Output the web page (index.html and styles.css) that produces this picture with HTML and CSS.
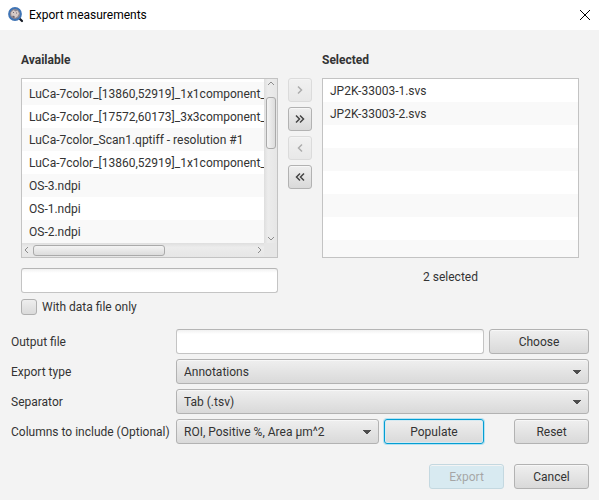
FILE: index.html
```html
<!DOCTYPE html>
<html lang="en">
<head>
<meta charset="utf-8">
<meta name="viewport" content="width=device-width, initial-scale=1">
<title>Export measurements</title>
<link rel="stylesheet" href="styles.css">
</head>
<body>
<header class="titlebar">
  <svg class="app-icon" viewBox="0 0 16 16" aria-hidden="true">
    <path d="M11.5 11.5 14 14" stroke="#171c26" stroke-width="2.2" stroke-linecap="round"/>
    <circle cx="7" cy="7" r="6" fill="#8d8790" stroke="#3f74b5" stroke-width="1.800"/>
    <path d="M3 5.500 5.500 3l2 1.500 2-1 1.500 3-1.500 3-2.500 1.500-1.500-2.500-2 .5z" fill="#d6cac6"/>
    <path d="M8 5.500h1v1H8zM5 9h1.500v1.500H5zM5 5h1v1H5z" fill="#6f6570"/>
  </svg>
  <h1 class="title">Export measurements</h1>
  <button class="close" type="button" aria-label="Close">
    <svg viewBox="0 0 10 10" aria-hidden="true"><path d="M0 0 10 10M10 0 0 10"/></svg>
  </button>
</header>

<main>
  <section class="picker">
    <div class="side">
      <h2>Available</h2>
      <div class="list scrolling">
        <ul class="rows">
          <li></li>
          <li>LuCa-7color_[13860,52919]_1x1component_data.tif</li>
          <li>LuCa-7color_[17572,60173]_3x3component_data.tif</li>
          <li>LuCa-7color_Scan1.qptiff - resolution #1</li>
          <li>LuCa-7color_[13860,52919]_1x1component_data.tif</li>
          <li>OS-3.ndpi</li>
          <li>OS-1.ndpi</li>
          <li>OS-2.ndpi</li>
        </ul>
        <div class="bar vertical">
          <svg viewBox="0 0 8 5" aria-hidden="true"><path d="M1 4 4 1 7 4"/></svg>
          <div class="track"><div class="thumb"></div></div>
          <svg viewBox="0 0 8 5" aria-hidden="true"><path d="M1 1 4 4 7 1"/></svg>
        </div>
        <div class="bar horizontal">
          <svg viewBox="0 0 5 8" aria-hidden="true"><path d="M4 1 1 4 4 7"/></svg>
          <div class="track"><div class="thumb"></div></div>
          <svg viewBox="0 0 5 8" aria-hidden="true"><path d="M1 1 4 4 1 7"/></svg>
        </div>
        <div class="corner"></div>
      </div>
      <input class="field" type="text" aria-label="Filter available images">
      <label class="check"><input type="checkbox">With data file only</label>
    </div>

    <div class="movers">
      <button class="button" type="button" aria-label="Select" disabled><svg viewBox="0 0 10 10" aria-hidden="true"><path d="M3 1.500 6.500 5 3 8.500"/></svg></button>
      <button class="button" type="button" aria-label="Select all"><svg viewBox="0 0 10 10" aria-hidden="true"><path d="M1 1.500 4.500 5 1 8.500M5 1.500 8.500 5 5 8.500"/></svg></button>
      <button class="button" type="button" aria-label="Remove" disabled><svg viewBox="0 0 10 10" aria-hidden="true"><path d="M7 1.500 3.500 5 7 8.500"/></svg></button>
      <button class="button" type="button" aria-label="Remove all"><svg viewBox="0 0 10 10" aria-hidden="true"><path d="M5 1.500 1.500 5 5 8.500M9 1.500 5.500 5 9 8.500"/></svg></button>
    </div>

    <div class="side">
      <h2>Selected</h2>
      <div class="list">
        <ul class="rows">
          <li>JP2K-33003-1.svs</li>
          <li>JP2K-33003-2.svs</li>
          <li></li><li></li><li></li><li></li><li></li><li></li>
        </ul>
      </div>
      <p class="count">2 selected</p>
    </div>
  </section>

  <form class="options">
    <label for="output">Output file</label>
    <div class="line">
      <input class="field grow" id="output" type="text">
      <button class="button wide" type="button">Choose</button>
    </div>
    <label for="type">Export type</label>
    <select class="button combo" id="type"><option>Annotations</option></select>
    <label for="separator">Separator</label>
    <select class="button combo" id="separator"><option>Tab (.tsv)</option></select>
    <label for="columns">Columns to include (Optional)</label>
    <div class="line">
      <select class="button combo grow" id="columns"><option>ROI, Positive %, Area µm^2</option></select>
      <button class="button wide focused" type="button">Populate</button>
      <button class="button reset" type="button">Reset</button>
    </div>
  </form>

  <footer class="actions">
    <button class="button default" type="button" disabled>Export</button>
    <button class="button" type="button">Cancel</button>
  </footer>
</main>
</body>
</html>
```
FILE: styles.css
```css
* {
  box-sizing: border-box;
}

body {
  margin: 0;
  min-height: 100vh;
  background: #f3f3f3;
  color: #333;
  font: 12px/16px Roboto, "Noto Sans", sans-serif;
}

h1, h2, p, ul {
  margin: 0;
  padding: 0;
}

button, input, select {
  margin: 0;
  color: inherit;
  font: inherit;
}

/* Title bar */
.titlebar {
  display: flex;
  align-items: center;
  height: 30px;
  padding: 0 8px;
  background: #fff;
  color: #000;
}

.app-icon {
  width: 16px;
  height: 16px;
  margin-right: 5px;
}

.title {
  flex: 1;
  font-size: 12px;
  font-weight: 400;
}

.close {
  display: flex;
  padding: 0;
  border: 0;
  background: none;
}

.close svg {
  width: 12px;
  height: 12px;
  padding: 1px;
  overflow: visible;
  stroke: #000;
}

/* Image lists */
.picker {
  display: grid;
  grid-template-columns: 1fr 24px 1fr;
  column-gap: 10px;
  padding: 22px 20px 0 21px;
}

.side {
  display: flex;
  flex-direction: column;
  min-width: 0;
}

h2 {
  margin-bottom: 10px;
  font-size: 12px;
  line-height: 16px;
  font-weight: 700;
}

.list {
  display: grid;
  grid-template: minmax(0, 1fr) / minmax(0, 1fr);
  height: 180px;
  margin-bottom: 10px;
  border: 1px solid #c3c3c3;
  background: #fff;
  overflow: hidden;
}

.list.scrolling {
  grid-template: minmax(0, 1fr) 14px / minmax(0, 1fr) 13px;
}

.rows {
  list-style: none;
  overflow: hidden;
}

.scrolling .rows {
  display: flex;
  flex-direction: column;
  justify-content: flex-end;
}

.rows li {
  flex: none;
  height: 23px;
  padding: 1px 7px 0;
  line-height: 23px;
  white-space: nowrap;
}

.rows li:nth-child(even) {
  background: #f9f9f9;
}

.bar {
  display: flex;
  align-items: center;
  gap: 4px;
  background: linear-gradient(to right, #dedede, #ececec 30%, #e6e6e6);
}

.bar.vertical {
  flex-direction: column;
  padding: 2px 0;
}

.bar.horizontal {
  padding: 0 2px;
  background: linear-gradient(#dedede, #ececec 30%, #e6e6e6);
}

.bar svg {
  flex: none;
  width: 5px;
  height: 8px;
  fill: none;
  stroke: #8c8c8c;
}

.bar.vertical svg {
  width: 8px;
  height: 5px;
}

.track {
  flex: 1;
}

.vertical .track {
  padding-top: 7px;
}

.thumb {
  width: 60%;
  height: 11px;
  border: 1px solid #aaa;
  border-radius: 3px;
  background: linear-gradient(#f4f4f4, #dcdcdc);
}

.vertical .thumb {
  width: 10px;
  height: 52px;
  background: linear-gradient(to right, #f4f4f4, #dcdcdc);
}

.corner {
  background: #e6e6e6;
}

.field {
  width: 100%;
  min-width: 0;
  height: 25px;
  padding: 0 7px;
  border: 1px solid #c4c4c4;
  border-top-color: #b5b5b5;
  border-radius: 3px;
  background: linear-gradient(#f1f1f1, #fff 4px);
}

.check {
  display: flex;
  align-items: center;
  gap: 5px;
  margin-top: 6px;
}

.check input {
  appearance: none;
  width: 16px;
  height: 16px;
  border: 1px solid #b0b0b0;
  border-radius: 3px;
  background: linear-gradient(#eee, #dadada);
}

.movers {
  display: flex;
  flex-direction: column;
  gap: 5px;
  padding-top: 26px;
}

.movers .button {
  display: flex;
  align-items: center;
  justify-content: center;
  height: 24px;
}

.movers svg {
  width: 10px;
  height: 10px;
  fill: none;
  stroke: #444;
  stroke-width: 1.5;
}

.count {
  padding-top: 1px;
  text-align: center;
}

/* Buttons and drop-downs */
.button {
  height: 25px;
  padding: 0;
  border: 1px solid #b2b2b2;
  border-radius: 3px;
  background: linear-gradient(#efefef, #d9d9d9);
  box-shadow: inset 0 1px #f7f7f7;
}

.button:disabled {
  opacity: 0.4;
}

.combo {
  appearance: none;
  width: 100%;
  min-width: 0;
  padding: 0 20px 0 7px;
  background:
    linear-gradient(to bottom left, #4d4d4d 50%, transparent 60%) right 11px center / 4px 4px no-repeat,
    linear-gradient(to bottom right, #4d4d4d 50%, transparent 60%) right 7px center / 4px 4px no-repeat,
    linear-gradient(#efefef, #d9d9d9);
}

.focused {
  border-color: #039ed3;
  box-shadow: 0 0 0 1px #b5e1f1, inset 0 0 0 1px #d5eaf2;
}

.default {
  border-color: #7fb0c5;
  background: #b1dfef;
}

.movers .button:disabled {
  border-color: #b8b8b8;
}

/* Export options */
.options {
  display: grid;
  grid-template-columns: 155px 1fr;
  align-items: center;
  gap: 5px 10px;
  margin-top: 14px;
  padding: 0 10px 0 11px;
}

.options label {
  white-space: nowrap;
}

.line {
  display: flex;
  gap: 5px;
}

.grow {
  flex: 1;
}

.wide {
  width: 100px;
}

.reset {
  width: 75px;
  margin-left: 25px;
}

.actions {
  display: flex;
  justify-content: flex-end;
  gap: 10px;
  padding: 20px 10px 11px;
}

.actions .button {
  width: 75px;
}
```
